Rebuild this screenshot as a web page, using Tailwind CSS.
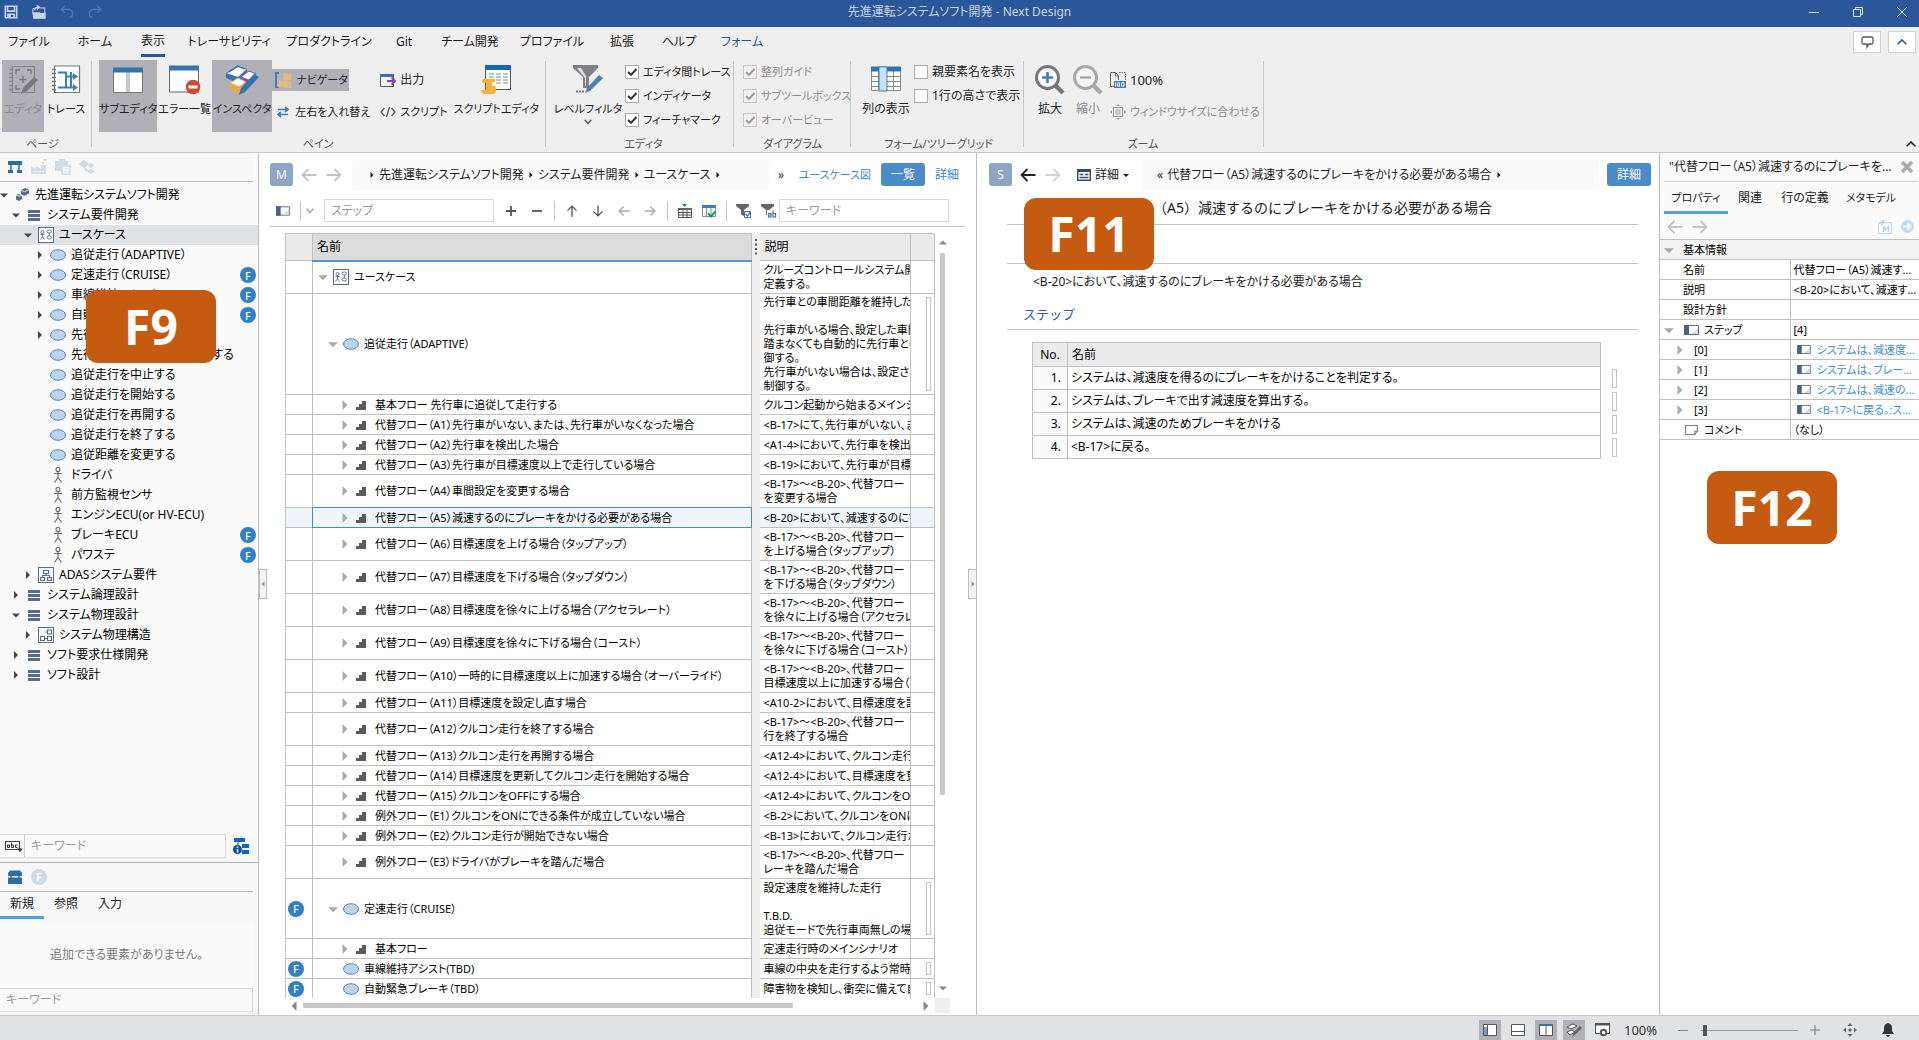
<!DOCTYPE html>
<html lang="ja">
<head>
<meta charset="utf-8">
<title>先進運転システムソフト開発 - Next Design</title>
<script src="https://cdn.jsdelivr.net/npm/@tailwindcss/browser@4"></script>
</head>
<body class="h-screen overflow-hidden flex flex-col bg-white text-[#1a1a1a] text-[12px] leading-4 whitespace-nowrap font-['Noto_Sans','Noto_Sans_CJK_JP',sans-serif] [font-feature-settings:'palt']">

<!-- Shared icon symbols -->
<svg class="hidden" aria-hidden="true">
  <symbol id="arrow-left" viewBox="0 0 16 14"><path d="M15.500 7H1.500M7.500 1L1.500 7l6 6" fill="none" stroke="currentColor" stroke-width="1.800"/></symbol>
  <symbol id="arrow-right" viewBox="0 0 16 14"><path d="M.5 7h14M8.500 1l6 6-6 6" fill="none" stroke="currentColor" stroke-width="1.800"/></symbol>
  <symbol id="tri-right" viewBox="0 0 8 8"><path d="M2 0l4 4-4 4z" fill="currentColor"/></symbol>
  <symbol id="tri-down" viewBox="0 0 8 8"><path d="M0 2.500h8L4 6.500z" fill="currentColor"/></symbol>
  <symbol id="project" viewBox="0 0 16 16"><path d="M7 3l4-2 4 1.500v4L10 9 7 7z M2 8l3-1 3 2v3l-3 2-3-1.500z" fill="#5a6b85"/><path d="M7 3.200l3.500 1.500L15 2.600M2 8.200l3 1 3-.6" stroke="#dfe3ea" fill="none"/></symbol>
  <symbol id="bars" viewBox="0 0 16 16"><path d="M2 3h12v3H2zM2 7h12v3H2zM2 11h12v3H2z" fill="#5a6b85"/></symbol>
  <symbol id="usecase" viewBox="0 0 16 16"><rect x=".5" y=".5" width="15" height="15" fill="#fff" stroke="#5a6b85"/><g fill="none" stroke="#5a6b85" stroke-width=".9"><circle cx="4.500" cy="5" r="1.500"/><path d="M4.500 6.500v3M2.500 7.500h4M2.500 12.500l2-3 2 3"/><ellipse cx="11.300" cy="4.500" rx="2.300" ry="1.500"/><ellipse cx="11.300" cy="10.500" rx="2.300" ry="1.500"/><path d="M11.300 6v3"/></g></symbol>
  <symbol id="ellipse" viewBox="0 0 16 12"><ellipse cx="8" cy="6" rx="7.500" ry="5.300" fill="#bdd3ec" stroke="#5584c4"/></symbol>
  <symbol id="actor" viewBox="0 0 16 16"><g fill="none" stroke="#666" stroke-width="1.100"><circle cx="8" cy="2.500" r="2"/><path d="M8 4.500v6M4 6.500h8M4.500 15.500L8 10.500l3.500 5"/></g></symbol>
  <symbol id="blocktree" viewBox="0 0 16 16"><rect x=".5" y=".5" width="15" height="15" fill="#fff" stroke="#5a6b85"/><path d="M5.500 3.500h5v3h-5zM2.500 10.500h4v3h-4zM9.500 10.500h4v3h-4zM8 6.500v2M4.500 10.500v-2h7v2" fill="none" stroke="#5a6b85" stroke-width="1.200"/></symbol>
  <symbol id="blocks" viewBox="0 0 16 16"><rect x=".5" y=".5" width="15" height="15" fill="#fff" stroke="#5a6b85"/><path d="M9.500 3h4v4h-4zM2.500 9.500h4v4h-4zM9.500 9.500h4v4h-4zM6.500 11.500h3M7.500 5h2" fill="none" stroke="#5a6b85" stroke-width="1.200"/></symbol>
  <symbol id="steps" viewBox="0 0 12 12"><path d="M1 11V8h3V5h3V2h4v9z" fill="#5b5b5f"/></symbol>
  <symbol id="field" viewBox="0 0 15 10"><path d="M.5.500h14v9H.5z" fill="#fff" stroke="#5a6b85"/><path d="M0 0h5v10H0z" fill="#4f617d"/><path d="M14 3v6H8z" fill="#d5d9e0"/></symbol>
  <symbol id="note" viewBox="0 0 15 12"><path d="M.5.500h14v7l-3 4H.5zM14.500 7.500h-3v4" fill="#fff" stroke="#555"/></symbol>
  <symbol id="tick" viewBox="0 0 14 14"><path d="M3 7l3 3 5.500-6" fill="none" stroke="currentColor" stroke-width="1.900"/></symbol>
</svg>

<!-- Title bar -->
<header class="relative flex h-[27px] shrink-0 items-center bg-[#2b579a] pb-1 text-[#c9d6ea]">
  <div class="flex items-center gap-[14px] pl-1">
    <button aria-label="保存"><svg viewBox="0 0 16 16" class="h-[14px] w-[14px]"><path d="M1.500 1.500h13v13h-13zM4 2v5h8V2M4.500 14.500v-4h7v4" fill="none" stroke="#c9d6ea" stroke-width="1.800"/><path d="M5 11h3v3H5z" fill="#c9d6ea"/></svg></button>
    <button aria-label="開く"><svg viewBox="0 0 16 16" class="h-[14px] w-[14px]"><path d="M1 9h14v6H2zM1 4h2M1 4v5M9 3.500h5.500V9" fill="#c9d6ea" stroke="#c9d6ea" stroke-width="1.200"/><path d="M9 4h5v5H9z" fill="#2b579a"/><path d="M3 6c0-3 2-3.500 5-3.500M5.500.500l3 2-3 2.500" fill="none" stroke="#c9d6ea" stroke-width="1.500"/></svg></button>
    <button aria-label="元に戻す"><svg viewBox="0 0 16 16" class="h-[14px] w-[14px]"><path d="M5.500 1L1.500 5l4 4M2 5h7c4 0 5.500 3 5.500 5s-1 4-3.500 4" fill="none" stroke="#5079b5" stroke-width="1.600"/></svg></button>
    <button aria-label="やり直し"><svg viewBox="0 0 16 16" class="h-[14px] w-[14px]"><path d="M10.500 1l4 4-4 4M14 5H7c-4 0-5.500 3-5.500 5s1 4 3.500 4" fill="none" stroke="#5079b5" stroke-width="1.600"/></svg></button>
  </div>
  <h1 class="absolute inset-x-0 top-1 text-center">先進運転システムソフト開発 - Next Design</h1>
  <div class="relative ml-auto flex items-center gap-[34px] pr-3">
    <button aria-label="最小化"><svg viewBox="0 0 10 10" class="h-[10px] w-[10px]"><path d="M0 5.500h10" stroke="#dce5f3"/></svg></button>
    <button aria-label="元のサイズ"><svg viewBox="0 0 10 10" class="h-[10px] w-[10px]"><path d="M.5 2.500h7v7h-7zM2.500 2V.500h7v7H8" fill="none" stroke="#dce5f3"/></svg></button>
    <button aria-label="閉じる"><svg viewBox="0 0 10 10" class="h-[10px] w-[10px]"><path d="M0 0l10 10M10 0L0 10" stroke="#dce5f3"/></svg></button>
  </div>
</header>

<!-- Ribbon tabs -->
<nav class="flex h-[30px] shrink-0 bg-[#efefef]">
  <div class="grid grid-cols-[58px_74px_42px_110px_90px_60px_72px_92px_48px_66px_60px]">
    <button>ファイル</button>
    <button>ホーム</button>
    <button class="flex flex-col items-center pt-[6px]"><span class="border-b-[3px] border-[#2b579a] pb-[5px]">表示</span></button>
    <button>トレーサビリティ</button>
    <button>プロダクトライン</button>
    <button>Git</button>
    <button>チーム開発</button>
    <button>プロファイル</button>
    <button>拡張</button>
    <button>ヘルプ</button>
    <button class="text-[#2b579a]">フォーム</button>
  </div>
  <div class="ml-auto flex gap-[7px] pr-[3px] pt-1">
    <button aria-label="コメント" class="flex h-[22px] w-7 items-center justify-center border border-[#d0d0d6] bg-white"><svg viewBox="0 0 13 13" class="h-[13px] w-[13px]"><path d="M2.500 1h8Q12 1 12 2.500v4Q12 8 10.500 8H8l-2 3V8H2.500Q1 8 1 6.500v-4Q1 1 2.500 1z" fill="none" stroke="#555" stroke-width="1.300"/></svg></button>
    <button aria-label="折りたたむ" class="flex h-[22px] w-7 items-center justify-center border border-[#d0d0d6] bg-white"><svg viewBox="0 0 10 6" class="h-[6px] w-[10px]"><path d="M.7 5.300L5 1l4.300 4.300" fill="none" stroke="#2b579a" stroke-width="1.600"/></svg></button>
  </div>
</nav>

<!-- Ribbon -->
<section class="flex h-24 shrink-0 border-b border-[#c6c6c6] bg-[#efefef] pt-[3px] text-[#222]">
  <div class="mb-[5px] mt-px flex w-[92px] flex-col justify-between border-r border-[#c6c6c6] pl-[2px]">
    <div class="-mt-px flex gap-[2px]">
      <button class="flex h-[72px] w-[42px] flex-col items-center gap-[6px] bg-[#b0b0b6] pt-[5px] text-[11px] text-[#8a8a8e]" disabled>
        <svg viewBox="0 0 30 30" class="h-[30px] w-[30px]"><path d="M4.500 1.500h22v26h-22z" fill="none" stroke="#85858a" stroke-width="1.200"/><path d="M4 4.500H1M4 8.500H1M4 12.500H1M4 16.500H1M4 20.500H1M4 24.500H1" stroke="#85858a" stroke-width="1.500"/><path d="M8 9V5h4M19 5h4v4M8 20v4h4M15 11v7M11.500 14.500h7" fill="none" stroke="#77777c" stroke-width="1.300"/><path d="M13 29l2-6L26 12l4 3-11 11z" fill="#77777c"/></svg>エディタ</button>
      <button class="flex w-10 flex-col items-center gap-[6px] pt-[5px] text-[11px]">
        <svg viewBox="0 0 30 30" class="h-[30px] w-[30px]"><path d="M3.500 1h25v26.500h-25z" fill="#fff" stroke="#777" stroke-width="1.200"/><path d="M5 4.500H1M5 8.500H1M5 12.500H1M5 16.500H1M5 20.500H1M5 24.500H1" stroke="#777" stroke-width="1.500"/><path d="M7 7.500h8v15h9M7 22.500h8M15 11.500h9M20 7v16" fill="none" stroke="#3f7bbf" stroke-width="2"/><path d="M22 8l5 3.500-5 3.500zM22 19l5 3.500-5 3.500z" fill="#3f7bbf"/></svg>トレース</button>
    </div>
    <div class="-mb-1 pr-2 text-center text-[11px] leading-[14px] text-[#555]">ページ</div>
  </div>

  <div class="mb-[5px] mt-px flex w-[454px] flex-col justify-between border-r border-[#c6c6c6] pl-[7px]">
    <div class="-mt-px flex">
      <button class="flex h-[72px] w-[60px] flex-col items-center gap-[6px] bg-[#b0b0b6] pt-[5px] text-[11px]">
        <svg viewBox="0 0 30 30" class="h-[30px] w-[30px]"><path d="M.5 6h29v21.500H.5z" fill="#fff" stroke="#777"/><path d="M14 7v20M16 7v20" stroke="#777" stroke-width=".8"/><path d="M0 2.500h30v5H0z" fill="#3572ae"/></svg>サブエディタ</button>
      <button class="flex w-[56px] flex-col items-center gap-[6px] pt-[5px] text-[11px]">
        <svg viewBox="0 0 32 30" class="h-[30px] w-8"><path d="M.5 3h29v24H.5z" fill="#fff" stroke="#666"/><path d="M0 .500h30v5H0z" fill="#3572ae"/><circle cx="24" cy="22" r="7.300" fill="#cc4b35"/><path d="M19.500 20.500h9v3h-9z" fill="#fff"/></svg>エラー一覧</button>
      <button class="flex h-[72px] w-[62px] flex-col items-center gap-[6px] bg-[#b0b0b6] pt-[5px] text-[11px]">
        <svg viewBox="0 0 34 30" class="h-[30px] w-[34px]"><path d="M2 8l9-8 10 4-7 8-11-1z" fill="#fff"/><path d="M1 8l12 4v6L1 13zM13 12l9-8v5l-9 9zM1 8l11-8 10 4" fill="#3572ae"/><path d="M5 7l8-5 6 2.500-6 5z" fill="#fff"/><path d="M16 12l8-6 7 3-7 6z" fill="#fff" stroke="#8a4bab"/><path d="M16 12l8 3.500V21l-8-4z" fill="#8a4bab"/><path d="M5 18l8-5 8 4-7 5z" fill="#fff" stroke="#eaa94b"/><path d="M5 18l9 4v7l-9-5zM14 22l7-5v7l-7 5z" fill="#eaa94b"/><path d="M14 30l2-7L29 9l5 3-14 15z" fill="#3572ae"/></svg>インスペクタ</button>
      <div class="flex flex-col items-start gap-[10px] pt-[9px]">
        <button class="flex h-[22px] items-center gap-1 bg-[#b0b0b6] pl-[3px] pr-px"><svg viewBox="0 0 17 17" class="h-[17px] w-[17px]"><path d="M0 0h4v16H0z" fill="#3f7bbf"/><path d="M2 2h2v12H2z" fill="#9fb9d6"/><path d="M8 1h3l1 1h4v6H8zM3 8h3l1 1h3v6H3zM10 9h3l1 1h2v6h-6z" fill="#e5b978" stroke="#c9c0b2" stroke-width=".6"/></svg><span class="text-[11px]">ナビゲータ</span></button>
        <button class="flex h-[22px] items-center gap-[6px] pl-[5px]"><svg viewBox="0 0 12 12" class="h-3 w-3"><path d="M1 3.500h9M8 1l3 2.500L8 6M11 8.500H2M4 6L1 8.500 4 11" fill="none" stroke="#3f7bbf" stroke-width="1.700"/></svg><span class="text-[11px]">左右を入れ替え</span></button>
      </div>
      <div class="flex flex-col items-start gap-[10px] pl-[10px] pt-[9px]">
        <button class="flex h-[22px] items-center gap-1"><svg viewBox="0 0 16 15" class="h-[15px] w-4"><path d="M.5 2.500h13v11H.5z" fill="#fff" stroke="#555"/><path d="M0 1h14v3H0z" fill="#3572ae"/><path d="M7 8h8M11.500 4.500L15 8l-3.500 3.500" fill="none" stroke="#8a3fb0" stroke-width="2"/></svg>出力</button>
        <button class="flex h-[22px] items-center gap-1"><svg viewBox="0 0 16 12" class="h-3 w-4"><path d="M4.500 2L1 6l3.500 4M11.500 2L15 6l-3.500 4M9.500 1l-3 10" fill="none" stroke="#555" stroke-width="1.300"/></svg><span class="text-[11px]">スクリプト</span></button>
      </div>
      <button class="ml-auto flex w-[100px] flex-col items-center gap-[6px] pt-[5px] text-[11px]">
        <svg viewBox="0 0 32 30" class="h-[30px] w-8"><path d="M5.500 1h25v23.500h-25z" fill="#fff" stroke="#555"/><path d="M5 0h26v5H5z" fill="#1464b8"/><path d="M9 9h5M9 12h5M9 15h5M16 9h5M16 12h5M16 15h5M16 18h5M23 9h5M23 12h5M23 15h5M23 18h5" stroke="#888"/><path d="M3 14h12v3h-3v4h3q1 0 1 4t-3 4H4q-3-1-3-4h5v-7H3q-2-2 0-4z" fill="#f8b334"/></svg>スクリプトエディタ</button>
    </div>
    <div class="-mb-1 pr-2 text-center text-[11px] leading-[14px] text-[#555]">ペイン</div>
  </div>

  <div class="mb-[5px] mt-px flex w-[188px] flex-col justify-between border-r border-[#c6c6c6] pl-2">
    <div class="-mt-px flex">
      <button class="flex w-[68px] flex-col items-center gap-[6px] pt-[5px] text-[11px]">
        <svg viewBox="0 0 30 30" class="h-[30px] w-[30px]"><path d="M0 0h25v3L16 12v11h-6V12L0 3z" fill="#808084"/><path d="M4 3h4l5 8v10h-1V13z" fill="#e0e0e0"/><path d="M3 26.500h2M6 26.500h2M9 26.500h2" stroke="#777" stroke-width="2"/><path d="M12 28l2-5L26 10l4 3-13 13z" fill="#4a7fbe"/></svg>レベルフィルタ
        <svg viewBox="0 0 8 6" class="-mt-1 h-[6px] w-2"><path d="M.7.700L4 4.500 7.300.700" fill="none" stroke="#555" stroke-width="1.400"/></svg></button>
      <div class="flex flex-col gap-2 pl-[3px] pt-1 text-[11px]" id="editor-checks"></div>
    </div>
    <div class="-mb-1 text-center text-[11px] leading-[14px] text-[#555]">エディタ</div>
  </div>

  <div class="mb-[5px] mt-px flex w-[117px] flex-col justify-between border-r border-[#c6c6c6] pl-[9px]">
    <div class="-mt-px flex flex-col gap-2 pt-1 text-[11px] text-[#8c8c8c]" id="diagram-checks"></div>
    <div class="-mb-1 pr-2 text-center text-[11px] leading-[14px] text-[#555]">ダイアグラム</div>
  </div>

  <div class="mb-[5px] mt-px flex w-[173px] flex-col justify-between border-r border-[#c6c6c6] pl-[7px]">
    <div class="-mt-px flex">
      <button class="flex w-[56px] flex-col items-center gap-[6px] pt-[5px]">
        <svg viewBox="0 0 30 30" class="h-[30px] w-[30px]"><path d="M.5 3.500h29v22H.5z" fill="#fff" stroke="#888"/><path d="M0 11.500h30M0 16.500h30M0 21.500h30M7.500 2v24M22.500 2v24" stroke="#888"/><path d="M0 1.500h30v5H0z" fill="#3572ae"/><path d="M8 2h8v24H8z" fill="#bfe6fa" stroke="#4f7c99"/></svg>列の表示</button>
      <div class="flex flex-col gap-2 pt-1" id="form-checks"></div>
    </div>
    <div class="-mb-1 pr-1 text-center text-[11px] leading-[14px] text-[#555]">フォーム/ツリーグリッド</div>
  </div>

  <div class="mb-[5px] mt-px flex w-60 flex-col justify-between border-r border-[#c6c6c6] pl-[7px]">
    <div class="-mt-px flex">
      <button class="flex w-[38px] flex-col items-center gap-[6px] pt-[5px]">
        <svg viewBox="0 0 30 30" class="h-[30px] w-[30px]"><path d="M20 20l8 8" stroke="#77777b" stroke-width="4.500"/><circle cx="12.500" cy="12.500" r="11" fill="#fff" stroke="#77777b" stroke-width="3"/><path d="M12.500 7v11M7 12.500h11" stroke="#3f7bbf" stroke-width="2.600"/></svg>拡大</button>
      <button class="flex w-[38px] flex-col items-center gap-[6px] pt-[5px] text-[#8c8c8c]" disabled>
        <svg viewBox="0 0 30 30" class="h-[30px] w-[30px]"><path d="M20 20l8 8" stroke="#a8a8a8" stroke-width="4.500"/><circle cx="12.500" cy="12.500" r="11" fill="#f4f4f4" stroke="#a8a8a8" stroke-width="3"/><path d="M7 12.500h11" stroke="#a0a0a0" stroke-width="2.200"/></svg>縮小</button>
      <div class="flex flex-col items-start gap-[10px] pl-[3px] pt-[9px]">
        <button class="flex h-[22px] items-center gap-1 text-[13px]"><svg viewBox="0 0 16 16" class="h-4 w-4"><path d="M4 14.500H.5V.500h5l3 3.500v4M5.500.500V4h3" fill="none" stroke="#666"/><path d="M9 .500h6.500V8" fill="none" stroke="#666" stroke-dasharray="1.500 1"/><path d="M4 9h12v7H4z" fill="#3f7bbf"/><path d="M5.500 10.500v4M7.500 10.800h2v3.400h-2zM11.500 10.800h2.500v3.400h-2.500z" stroke="#fff" fill="none"/></svg>100%</button>
        <button class="flex h-[22px] items-center gap-1 text-[11px] text-[#8c8c8c]" disabled><svg viewBox="0 0 16 16" class="h-4 w-4"><path d="M3.500 3.500h9v9h-9z" fill="none" stroke="#999"/><path d="M5.500 6h5M5.500 8h5M5.500 10h5" stroke="#999"/><path d="M8 0l2 2H6zM8 16l2-2H6zM0 8l2-2v4zM16 8l-2-2v4z" fill="#999"/></svg>ウィンドウサイズに合わせる</button>
      </div>
    </div>
    <div class="-mb-1 pr-2 text-center text-[11px] leading-[14px] text-[#555]">ズーム</div>
  </div>
  <button aria-label="リボンを最小化" class="mb-[5px] ml-auto mr-[3px] self-end"><svg viewBox="0 0 10 6" class="h-[6px] w-[10px]"><path d="M.7 5.300L5 1l4.300 4.300" fill="none" stroke="#222" stroke-width="1.600"/></svg></button>
</section>

<!-- Work area -->
<div class="flex min-h-0 flex-1">

  <!-- Navigator -->
  <aside class="relative flex w-[259px] shrink-0 flex-col border-r border-[#bdbdc0] bg-[#fafafa]">
    <div class="mr-[5px] flex h-[29px] shrink-0 items-center gap-2 border-b border-[#bdbdc0] bg-[#f8f8f8] pl-[7px]">
      <svg viewBox="0 0 16 14" class="h-[14px] w-4"><path d="M1 1h14v4H1zM1 10h5v3H1zM10 10h5v3h-5z" fill="#2b6cab"/><path d="M4 5v5M12 5v5" stroke="#2b6cab" stroke-width="1.500"/></svg>
      <svg viewBox="0 0 16 16" class="h-4 w-4"><path d="M0 15V7l5 3V7l5 3V6h5v9zM11 3h2v2h-2zM12 0h4v1.500h-4z" fill="#d0dbe6"/><path d="M2 12.500h12" stroke="#fff" stroke-dasharray="2 1"/></svg>
      <svg viewBox="0 0 16 16" class="h-4 w-4"><path d="M0 2h4V0h6v2h3v4H7v6H0z" fill="#d0dbe6"/><path d="M7 7h8v8H7z" fill="#fff" stroke="#d0dbe6" stroke-width="1.500"/><path d="M9 10h5M9 12.500h5" stroke="#d0dbe6"/></svg>
      <svg viewBox="0 0 16 16" class="h-4 w-4"><path d="M5 1l5 4-5 4-5-4zM12 4l3 2.500L12 9 9.500 6.500zM12 10l3 2.500-3 2.500-3-2.500zM6 8v4h4" fill="#d0dbe6" stroke="#d0dbe6" stroke-width=".5"/></svg>
    </div>
    <ul class="min-h-0 flex-1 overflow-hidden pt-[3px]" id="tree"></ul>
    <div class="flex h-7 shrink-0 items-start bg-[#f7f7f7]">
      <div class="flex h-6 w-[226px] items-center border border-l-0 border-[#dadada] bg-[#fafafa]">
        <svg viewBox="0 0 18 14" class="ml-[5px] h-[14px] w-[18px]"><path d="M.5 2.500h14v8H.5z" fill="none" stroke="#444" stroke-width="1.200"/><path d="M2.500 8.500v-2.500h2v2.500zM6.500 3.500v5h2V6h-2M12.500 6h-2v2.500h2" fill="none" stroke="#333"/><path d="M12 9.500h6l-3 3.500z" fill="#333"/></svg>
        <div class="ml-px h-[22px] border-l border-[#c8ced8]"></div>
        <input aria-label="ナビゲータ検索" placeholder="キーワード" class="ml-[6px] w-[180px] bg-transparent text-[12px] outline-none placeholder:text-[#9a9a9a]">
      </div>
      <svg viewBox="0 0 16 16" class="ml-[7px] mt-1 h-4 w-4"><path d="M1 0h11v4H1zM9 6h7v4H9zM9 12h7v4H9z" fill="#1464b8"/><path d="M5 4v4" stroke="#555"/><circle cx="4.500" cy="11.500" r="4.500" fill="#0d4da3"/><path d="M4.500 8.500v1.500M4.500 11v3.500" stroke="#fff" stroke-width="1.500"/></svg>
    </div>
    <div class="shrink-0 border-t border-[#b0b0b4] bg-[#f7f7f7]">
      <div class="mr-[5px] flex h-[29px] items-center gap-2 border-b border-[#bdbdc0] pl-[7px]">
        <svg viewBox="0 0 16 14" class="h-[14px] w-4"><path d="M1 3l2-2.500h10L15 3v3H1zM1 7.500h14V14H1z" fill="#2b6cab"/><path d="M4 6v3M12 6v3" stroke="#2b6cab" stroke-width="1.500"/></svg>
        <span class="flex h-4 w-4 items-center justify-center rounded-full bg-[#cddbe7] text-[10px] font-bold text-white">F</span>
      </div>
      <div class="mb-[3px] flex h-[27px]">
        <button class="w-11 border-b-[3px] border-[#4aa3dc]">新規</button>
        <button class="w-11 border-b-[3px] border-transparent">参照</button>
        <button class="w-11 border-b-[3px] border-transparent">入力</button>
      </div>
      <div class="mr-[5px] h-[66px] bg-[#fafafa] text-center leading-[66px] text-[#777]">追加できる要素がありません。</div>
      <div class="mb-[3px] mr-[5px] flex h-6 items-center border border-l-0 border-[#dadada] bg-[#fafafa] pl-[6px]">
        <input aria-label="要素検索" placeholder="キーワード" class="w-full bg-transparent text-[12px] outline-none placeholder:text-[#9a9a9a]">
      </div>
    </div>
    <button aria-label="ナビゲータを閉じる" class="absolute -right-[9px] top-[416px] z-10 flex h-[30px] w-2 items-center justify-center border border-[#bdbdc0] bg-[#f4f4f4] text-[#999]"><svg class="h-[6px] w-[6px] rotate-180"><use href="#tri-right"/></svg></button>
    <kbd class="absolute left-[86px] top-[137px] flex h-[73px] w-[130px] items-center justify-center rounded-[12px] bg-[#c55a11] font-['Noto_Sans'] text-[48px] font-bold leading-none text-white">F9</kbd>
  </aside>

  <!-- Main editor -->
  <main class="relative flex min-w-0 flex-[695] flex-col border-r border-[#bdbdc0] pl-[11px] pr-[11px]">
    <div class="flex h-[43px] shrink-0 items-center">
      <span class="flex h-[23px] w-[23px] items-center justify-center rounded-[3px] bg-[#8ea4c4] text-white">M</span>
      <button aria-label="戻る" class="ml-2 text-[#c4c4c4]"><svg class="h-[14px] w-4"><use href="#arrow-left"/></svg></button>
      <button aria-label="進む" class="ml-[9px] text-[#c4c4c4]"><svg class="h-[14px] w-4"><use href="#arrow-right"/></svg></button>
      <nav class="ml-[10px] flex h-[30px] min-w-0 flex-1 items-center gap-[3px] rounded-[3px] bg-[#fafafa] pl-4 text-[#1a1a1a]">
        <svg class="h-[6px] w-2"><use href="#tri-right"/></svg><a href="#p">先進運転システムソフト開発</a>
        <svg class="h-[6px] w-2"><use href="#tri-right"/></svg><a href="#r">システム要件開発</a>
        <svg class="h-[6px] w-2"><use href="#tri-right"/></svg><a href="#u">ユースケース</a>
        <svg class="h-[6px] w-2"><use href="#tri-right"/></svg>
      </nav>
      <div class="flex w-[196px] items-center justify-end pr-[6px] text-[#3f86c8]">
        <span class="mr-auto pl-[9px] text-[#333]">»</span>
        <a href="#diagram" class="text-[11px]">ユースケース図</a>
        <button class="ml-[10px] h-[23px] w-11 rounded-[3px] bg-[#4a8cc8] text-white">一覧</button>
        <a href="#detail" class="ml-[10px]">詳細</a>
      </div>
    </div>

    <div class="flex h-[31px] shrink-0 items-start border-b border-[#c4c4c4] pt-[3px]">
      <div class="flex h-[23px] w-full items-center">
        <svg class="ml-[6px] h-[10px] w-[14px]"><use href="#field"/></svg>
        <div class="ml-[10px] h-5 border-l border-[#c8c8c8]"></div>
        <svg viewBox="0 0 8 6" class="ml-[5px] h-[6px] w-2"><path d="M.5.500L4 4.500 7.500.500" fill="none" stroke="#aaa" stroke-width="1.500"/></svg>
        <input aria-label="追加要素" placeholder="ステップ" class="ml-[10px] h-[23px] w-[170px] border border-[#d8d8d8] bg-white px-[6px] outline-none placeholder:text-[#9a9a9a]">
        <button aria-label="追加" class="ml-3"><svg viewBox="0 0 10 10" class="h-[10px] w-[10px]"><path d="M5 0v10M0 5h10" stroke="#555" stroke-width="1.800"/></svg></button>
        <button aria-label="削除" class="ml-4"><svg viewBox="0 0 10 10" class="h-[10px] w-[10px]"><path d="M0 5h10" stroke="#555" stroke-width="1.800"/></svg></button>
        <div class="ml-3 h-5 border-l border-[#c8c8c8]"></div>
        <div class="ml-[11px] flex items-center gap-[14px] text-[#555]">
          <svg class="h-3 w-3 rotate-90"><use href="#arrow-left"/></svg>
          <svg class="h-3 w-3 rotate-90"><use href="#arrow-right"/></svg>
          <svg class="h-3 w-3 text-[#aaa]"><use href="#arrow-left"/></svg>
          <svg class="h-3 w-3 text-[#aaa]"><use href="#arrow-right"/></svg>
        </div>
        <div class="ml-[11px] h-5 border-l border-[#c8c8c8]"></div>
        <svg viewBox="0 0 14 14" class="ml-[10px] h-[14px] w-[14px]"><path d="M4 0h5L6.500 3z" fill="#1f8a3b"/><path d="M.5 5.500h13v8H.5zM.5 8.500h13M.5 11h13M5 6v8M9 6v8" fill="none" stroke="#555"/><path d="M0 4h14v2H0z" fill="#666"/></svg>
        <svg viewBox="0 0 14 14" class="ml-[10px] h-[14px] w-[14px]"><path d="M.5 1.500h13v11H.5zM4.500 2v10M9 2v10" fill="#fff" stroke="#6f93bb"/><path d="M0 1h14v3H0z" fill="#3f7bbf"/><path d="M6 9.500l3 3L14 7" fill="none" stroke="#1f9a4b" stroke-width="2"/></svg>
        <div class="ml-[10px] h-5 border-l border-[#c8c8c8]"></div>
        <svg viewBox="0 0 15 14" class="ml-[9px] h-[14px] w-[15px]"><path d="M0 0h13v2L8 6v6l-3-1.500V6L0 2z" fill="#66666a"/><path d="M8.500 7.500h6v6h-6z" fill="#fff" stroke="#3f6fa8"/><path d="M9.500 10l2 2 3-4" fill="none" stroke="#3f6fa8" stroke-width="1.300"/></svg>
        <svg viewBox="0 0 16 14" class="ml-[10px] h-[14px] w-4"><path d="M0 0h13v2L8 6v6l-3-1.500V6L0 2z" fill="#66666a"/><path d="M6 6h10v8H6z" fill="#fff"/><path d="M7 9.500h3v3.500H7.500v-2H10M12 6.500V13h2.500V9.500H12" fill="none" stroke="#3f6fa8" stroke-width="1.200"/></svg>
        <input aria-label="一覧検索" placeholder="キーワード" class="ml-[2px] h-[23px] w-[170px] border border-[#d8d8d8] bg-white px-[6px] outline-none placeholder:text-[#9a9a9a]">
      </div>
    </div>

    <div class="mt-[6px] flex min-h-0 flex-1 pl-[15px] pr-[15px]">
      <div class="min-w-0 flex-1 overflow-hidden">
        <table class="w-full table-fixed border-collapse text-[11px] leading-[14px] text-black">
          <colgroup><col class="w-[27px]"><col><col class="w-2"><col class="w-[151px]"><col class="w-6"></colgroup>
          <thead>
            <tr class="h-[27px] bg-[#ebebeb] text-left">
              <th class="border border-[#c0c0c0]"></th>
              <th class="border border-b-2 border-[#c0c0c0] border-b-[#4a9ad4] bg-[#dcdcdc] pl-1 text-[12px] font-normal">名前</th>
              <th class="bg-[#efefef]"><svg viewBox="0 0 2 16" class="mx-auto h-4 w-[2px]"><path d="M1 0v16" stroke="#555" stroke-width="2" stroke-dasharray="2 2.500"/></svg></th>
              <th class="border border-l-0 border-[#c0c0c0] pl-[5px] text-[12px] font-normal">説明</th>
              <th class="border border-[#c0c0c0]"></th>
            </tr>
          </thead>
          <tbody id="grid"></tbody>
        </table>
      </div>
      <div class="flex w-[15px] shrink-0 flex-col items-center gap-[6px] pt-[6px] text-[#888]">
        <svg class="h-2 w-[10px] rotate-180"><use href="#tri-down"/></svg>
        <div class="h-[542px] w-[5px] bg-[#c9c9c9]"></div>
        <svg class="mb-[6px] mt-auto h-2 w-[10px]"><use href="#tri-down"/></svg>
      </div>
    </div>
    <div class="mb-[2px] flex h-[15px] shrink-0 items-center pl-[19px] pr-[15px] text-[#888]">
      <svg class="h-[10px] w-[10px] rotate-180"><use href="#tri-right"/></svg>
      <div class="ml-1 h-[5px] w-[490px] bg-[#c9c9c9]"></div>
      <svg class="ml-auto h-[10px] w-[10px]"><use href="#tri-right"/></svg>
      <div class="ml-1 h-[15px] w-[15px] bg-[#efefef]"></div>
    </div>
    <button aria-label="サブエディタを閉じる" class="absolute right-0 top-[416px] flex h-[30px] w-2 items-center justify-center border border-r-0 border-[#bdbdc0] bg-[#f4f4f4] text-[#999]"><svg class="h-[6px] w-[6px]"><use href="#tri-right"/></svg></button>
  </main>

  <!-- Sub editor -->
  <section class="relative flex min-w-0 flex-[682] flex-col border-r border-[#bdbdc0]">
    <div class="flex h-[43px] shrink-0 items-center pl-3 pr-2">
      <span class="flex h-[23px] w-[23px] items-center justify-center rounded-[3px] bg-[#8ea4c4] text-white">S</span>
      <button aria-label="戻る" class="ml-2 text-[#222]"><svg class="h-[14px] w-4"><use href="#arrow-left"/></svg></button>
      <button aria-label="進む" class="ml-[9px] text-[#d4d4d4]"><svg class="h-[14px] w-4"><use href="#arrow-right"/></svg></button>
      <button class="ml-4 flex items-center gap-1"><svg viewBox="0 0 14 12" class="h-3 w-[14px]"><path d="M.7.700h12.600v10.600H.7z" fill="#fff" stroke="#3a4a66" stroke-width="1.400"/><path d="M0 0h14v3H0z" fill="#3a4a66"/><path d="M2.500 5.500h4M2.500 8.500h9M8 5.500h3.500" stroke="#3a4a66" stroke-width="1.300"/></svg>詳細<svg class="h-[6px] w-[6px]"><use href="#tri-down"/></svg></button>
      <nav class="ml-3 flex h-[30px] min-w-0 flex-1 items-center gap-1 rounded-[3px] bg-[#fafafa] pl-4">
        <span>«</span><a href="#a5">代替フロー（A5）減速するのにブレーキをかける必要がある場合</a>
        <svg class="h-[6px] w-2"><use href="#tri-right"/></svg>
      </nav>
      <button class="ml-2 h-[23px] w-11 rounded-[3px] bg-[#4a8cc8] text-white">詳細</button>
    </div>
    <div class="pl-[30px] pr-[21px]">
      <h2 class="h-[29px] border-b border-[#c4c4c4] pl-[76px] text-[14px] leading-6 [font-feature-settings:normal]">代替フロー（A5）減速するのにブレーキをかける必要がある場合</h2>
      <h3 class="h-[39px] border-b border-[#c4c4c4] pl-5 pt-3 text-[13px] leading-6 text-[#3a50b0]">説明</h3>
      <p class="h-[38px] pl-[26px] pt-[10px]">&lt;B-20&gt;において、減速するのにブレーキをかける必要がある場合</p>
      <h3 class="h-[28px] border-b border-[#c4c4c4] pl-4 text-[13px] leading-6 text-[#3a50b0] [font-feature-settings:normal]">ステップ</h3>
      <div class="mt-3 flex pl-[25px] pr-[21px]">
        <table class="min-w-0 flex-1 table-fixed border-collapse text-black">
          <colgroup><col class="w-[35px]"><col></colgroup>
          <thead><tr class="h-6 bg-[#ebebeb]"><th class="w-[35px] border border-[#c0c0c0] font-normal">No.</th><th class="w-[534px] border border-[#c0c0c0] pl-1 text-left font-normal">名前</th></tr></thead>
          <tbody>
            <tr class="h-[23px]"><td class="border border-[#c0c0c0] bg-[#fafafa] pr-[6px] text-right">1.</td><td class="border border-[#c0c0c0] pl-[3px]">システムは、減速度を得るのにブレーキをかけることを判定する。</td></tr>
            <tr class="h-[23px]"><td class="border border-[#c0c0c0] bg-[#fafafa] pr-[6px] text-right">2.</td><td class="border border-[#c0c0c0] pl-[3px]">システムは、ブレーキで出す減速度を算出する。</td></tr>
            <tr class="h-[23px]"><td class="border border-[#c0c0c0] bg-[#fafafa] pr-[6px] text-right">3.</td><td class="border border-[#c0c0c0] pl-[3px]">システムは、減速のためブレーキをかける</td></tr>
            <tr class="h-[23px]"><td class="border border-[#c0c0c0] bg-[#fafafa] pr-[6px] text-right">4.</td><td class="border border-[#c0c0c0] pl-[3px]">&lt;B-17&gt;に戻る。</td></tr>
          </tbody>
        </table>
        <div class="ml-[11px] flex flex-col gap-1 pt-[27px]">
          <i class="h-[19px] w-[5px] border border-[#c4c4c4]"></i>
          <i class="h-[19px] w-[5px] border border-[#c4c4c4]"></i>
          <i class="h-[19px] w-[5px] border border-[#c4c4c4]"></i>
          <i class="h-[19px] w-[5px] border border-[#c4c4c4]"></i>
        </div>
      </div>
    </div>
    <kbd class="absolute left-[47px] top-[45px] flex h-[72px] w-[130px] items-center justify-center rounded-[12px] bg-[#c55a11] font-['Noto_Sans'] text-[48px] font-bold leading-none text-white">F11</kbd>
  </section>

  <!-- Inspector -->
  <aside class="relative flex w-[259px] shrink-0 flex-col">
    <div class="bg-[#fafafa] pl-1">
      <div class="mr-px flex h-[29px] items-center border-b border-[#d0d0d0] pl-[5px] pr-1">
        <h2 class="w-[226px] truncate">"代替フロー（A5）減速するのにブレーキをかける必要がある場合"</h2>
        <button aria-label="閉じる" class="ml-auto"><svg viewBox="0 0 14 14" class="h-[14px] w-[14px]"><path d="M2 2l10 10M12 2L2 12" stroke="#aaa" stroke-width="3.500"/></svg></button>
      </div>
      <div class="flex h-8 pr-2">
        <button class="w-16 border-b-[3px] border-[#4aa3dc] pt-[2px] text-[11px]">プロパティ</button>
        <button class="w-11 border-b-[3px] border-transparent pt-[2px]">関連</button>
        <button class="w-[66px] border-b-[3px] border-transparent pt-[2px]">行の定義</button>
        <button class="w-[66px] border-b-[3px] border-transparent pt-[2px] text-[11px]">メタモデル</button>
      </div>
      <div class="flex h-[25px] items-center gap-[9px] pl-[3px] pr-[5px] text-[#c4c4c4]">
        <svg class="h-[14px] w-4"><use href="#arrow-left"/></svg>
        <svg class="h-[14px] w-4"><use href="#arrow-right"/></svg>
        <svg viewBox="0 0 15 14" class="ml-auto h-[14px] w-[15px]"><path d="M1.500 5v8.500h13V2.500H8" fill="none" stroke="#ccd6df"/><path d="M2 4c1-2 2-2 5-2M5 0l2 2-2 2.500M6.500 12V7l2.500 3 2.500-3v5" fill="none" stroke="#b9d0e2" stroke-width="1.400"/></svg>
        <svg viewBox="0 0 13 13" class="h-[13px] w-[13px]"><circle cx="6.500" cy="6.500" r="6.500" fill="#c6dcec"/><path d="M2.500 6.500h7M6.500 3.500l3 3-3 3" fill="none" stroke="#fff" stroke-width="1.600"/></svg>
      </div>
    </div>
    <table class="w-full table-fixed border-collapse text-[11px] leading-4 text-black">
      <colgroup><col class="w-[130px]"><col></colgroup>
      <tbody id="props"></tbody>
    </table>
    <kbd class="absolute left-[47px] top-[318px] flex h-[73px] w-[130px] items-center justify-center rounded-[12px] bg-[#c55a11] font-['Noto_Sans'] text-[48px] font-bold leading-none text-white">F12</kbd>
  </aside>
</div>

<!-- Status bar -->
<footer class="flex h-[25px] shrink-0 items-center justify-end border-t border-[#c9cacc] bg-[#e1e2e4] pr-6 pt-1">
  <div class="flex items-center gap-[6px]">
    <button aria-label="ナビゲータ" class="flex h-5 w-[22px] items-center justify-center bg-[#b0b0b6]"><svg viewBox="0 0 14 12" class="h-3 w-[14px]"><path d="M.5.500h13v11H.5zM4.500 1v10" fill="#fff" stroke="#555"/><path d="M1 3h3v8H1z" fill="#7f9dbf"/></svg></button>
    <button aria-label="出力" class="flex h-5 w-[22px] items-center justify-center"><svg viewBox="0 0 14 12" class="h-3 w-[14px]"><path d="M.5.500h13v11H.5zM1 7.500h12" fill="#fff" stroke="#555"/></svg></button>
    <button aria-label="サブエディタ" class="flex h-5 w-[22px] items-center justify-center bg-[#b0b0b6]"><svg viewBox="0 0 14 12" class="h-3 w-[14px]"><path d="M.5.500h13v11H.5zM7 1v10" fill="#fff" stroke="#555"/><path d="M0 0h14v2H0z" fill="#3572ae"/></svg></button>
    <button aria-label="インスペクタ" class="flex h-5 w-[22px] items-center justify-center bg-[#b0b0b6]"><svg viewBox="0 0 16 14" class="h-[14px] w-4"><path d="M1 4l6-3 4 2-6 3zM1 9l5-2 3 2-5 3z" fill="#fff" stroke="#555"/><path d="M6 14l2-5 6-6 2 2-6 6z" fill="#666"/></svg></button>
    <button aria-label="設定" class="flex h-5 w-[22px] items-center justify-center"><svg viewBox="0 0 15 14" class="h-[14px] w-[15px]"><path d="M.5.500h14v10H.5z" fill="#fff" stroke="#555"/><path d="M0 0h15v2.500H0z" fill="#555"/><circle cx="8.500" cy="9.500" r="2.800" fill="#fff" stroke="#555" stroke-width="2"/></svg></button>
  </div>
  <span class="ml-[11px] w-12 text-[13px] text-[#333]">100%</span>
  <button aria-label="縮小" class="ml-[6px]"><svg viewBox="0 0 10 10" class="h-[10px] w-[10px]"><path d="M0 5.500h10" stroke="#888"/></svg></button>
  <input aria-label="ズーム" type="range" value="3" class="ml-3 h-[14px] w-[98px] appearance-none bg-transparent [&::-webkit-slider-runnable-track]:h-px [&::-webkit-slider-runnable-track]:bg-[#999] [&::-webkit-slider-thumb]:-mt-[5px] [&::-webkit-slider-thumb]:h-[11px] [&::-webkit-slider-thumb]:w-1 [&::-webkit-slider-thumb]:appearance-none [&::-webkit-slider-thumb]:bg-[#555]">
  <button aria-label="拡大" class="ml-3"><svg viewBox="0 0 10 10" class="h-[10px] w-[10px]"><path d="M0 5h10M5 0v10" stroke="#777"/></svg></button>
  <svg viewBox="0 0 14 14" class="ml-[23px] h-[14px] w-[14px]"><path d="M7 0l2.500 3h-5zM7 14l2.500-3h-5zM0 7l3-2.500v5zM14 7l-3-2.500v5zM5 7l2-2 2 2-2 2z" fill="#666"/></svg>
  <svg viewBox="0 0 14 14" class="ml-6 h-[14px] w-[14px]"><path d="M7 0q4 1 4 5v3l2 3H1l2-3V5q0-4 4-5zM5 12h4q-.5 2-2 2t-2-2z" fill="#333"/></svg>
</footer>

<script>
const use = (id, cls) => `<svg class="${cls}"><use href="#${id}"/></svg>`;
const fMark = '<span class="flex h-4 w-4 items-center justify-center rounded-full bg-[#3080c4] text-[11px] font-medium leading-none text-white">F</span>';

// Ribbon check boxes
const check = (label, on, off) => `<label class="flex h-4 items-center gap-1"><span class="relative h-[14px] w-[14px]"><input type="checkbox" ${on ? 'checked' : ''} ${off ? 'disabled' : ''} class="block h-[14px] w-[14px] appearance-none border border-[#ababab] bg-white disabled:border-[#c8c8c8] disabled:bg-[#f0f0f0]">${on ? `<svg class="pointer-events-none absolute left-0 top-0 h-[14px] w-[14px] ${off ? 'text-[#999]' : 'text-[#333]'}"><use href="#tick"/></svg>` : ''}</span>${label}</label>`;
document.getElementById('editor-checks').innerHTML = ['エディタ間トレース', 'インディケータ', 'フィーチャマーク'].map(t => check(t, true, false)).join('');
document.getElementById('diagram-checks').innerHTML = ['整列ガイド', 'サブツールボックス', 'オーバービュー'].map(t => check(t, true, true)).join('');
document.getElementById('form-checks').innerHTML = ['親要素名を表示', '1行の高さで表示'].map(t => check(t, false, false)).join('');

// Project tree: [level, arrow, icon, label, feature mark]
const tree = [
  [0,'d','project','先進運転システムソフト開発'],[1,'d','bars','システム要件開発'],[2,'d','usecase','ユースケース'],
  [3,'r','ellipse','追従走行（ADAPTIVE）'],[3,'r','ellipse','定速走行（CRUISE）',1],[3,'r','ellipse','車線維持アシスト(TBD)',1],
  [3,'r','ellipse','自動緊急ブレーキ（TBD）',1],[3,'r','ellipse','先行車を検出する'],[3,'','ellipse','先行車との車間距離を維持する'],
  [3,'','ellipse','追従走行を中止する'],[3,'','ellipse','追従走行を開始する'],[3,'','ellipse','追従走行を再開する'],
  [3,'','ellipse','追従走行を終了する'],[3,'','ellipse','追従距離を変更する'],[3,'','actor','ドライバ'],
  [3,'','actor','前方監視センサ'],[3,'','actor','エンジンECU(or HV-ECU)'],[3,'','actor','ブレーキECU',1],[3,'','actor','パワステ',1],
  [2,'r','blocktree','ADASシステム要件'],[1,'r','bars','システム論理設計'],[1,'d','bars','システム物理設計'],
  [2,'r','blocks','システム物理構造'],[1,'r','bars','ソフト要求仕様開発'],[1,'r','bars','ソフト設計']
];
const indent = ['pl-0', 'pl-3', 'pl-6', 'pl-9'];
document.getElementById('tree').innerHTML = tree.map(([lv, ar, ic, t, f]) =>
  `<li class="flex h-5 items-center pr-[2px] text-black ${indent[lv]} ${t === 'ユースケース' ? 'bg-[#e1e2e6]' : ''}"><span class="w-2 text-[#444]">${ar ? use(ar === 'd' ? 'tri-down' : 'tri-right', 'h-2 w-2') : ''}</span>${use(ic, 'ml-[6px] h-4 w-4')}<span class="ml-[5px] flex-1">${t}</span>${f ? fMark : ''}</li>`).join('');

// Use-case list: [name, description, row height, kind, feature mark, scroll mark]
const rows = [
  ['ユースケース','クルーズコントロールシステム開発における、ユースケースを\n定義する。','h-[33px]','root'],
  ['追従走行（ADAPTIVE）','先行車との車間距離を維持した走行\n \n先行車がいる場合、設定した車間距離\n踏まなくても自動的に先行車との車間\n御する。\n先行車がいない場合は、設定された速度\n制御する。','h-[101px]','case',0,1],
  ['基本フロー 先行車に追従して走行する','クルコン起動から始まるメインシナリオ'],
  ['代替フロー（A1）先行車がいない、または、先行車がいなくなった場合','<B-17>にて、先行車がいない、または'],
  ['代替フロー（A2）先行車を検出した場合','<A1-4>において、先行車を検出した場合'],
  ['代替フロー（A3）先行車が目標速度以上で走行している場合','<B-19>において、先行車が目標速度以上'],
  ['代替フロー（A4）車間設定を変更する場合','<B-17>～<B-20>、代替フロー\nを変更する場合','h-[33px]'],
  ['代替フロー（A5）減速するのにブレーキをかける必要がある場合','<B-20>において、減速するのにブレーキ','h-5','selected'],
  ['代替フロー（A6）目標速度を上げる場合（タップアップ）','<B-17>～<B-20>、代替フロー\nを上げる場合（タップアップ）','h-[33px]'],
  ['代替フロー（A7）目標速度を下げる場合（タップダウン）','<B-17>～<B-20>、代替フロー\nを下げる場合（タップダウン）','h-[33px]'],
  ['代替フロー（A8）目標速度を徐々に上げる場合（アクセラレート）','<B-17>～<B-20>、代替フロー\nを徐々に上げる場合（アクセラレート）','h-[33px]'],
  ['代替フロー（A9）目標速度を徐々に下げる場合（コースト）','<B-17>～<B-20>、代替フロー\nを徐々に下げる場合（コースト）','h-[33px]'],
  ['代替フロー（A10）一時的に目標速度以上に加速する場合（オーバーライド）','<B-17>～<B-20>、代替フロー\n目標速度以上に加速する場合（オーバー','h-[33px]'],
  ['代替フロー（A11）目標速度を設定し直す場合','<A10-2>において、目標速度を設定'],
  ['代替フロー（A12）クルコン走行を終了する場合','<B-17>～<B-20>、代替フロー\n行を終了する場合','h-[33px]'],
  ['代替フロー（A13）クルコン走行を再開する場合','<A12-4>において、クルコン走行を再開'],
  ['代替フロー（A14）目標速度を更新してクルコン走行を開始する場合','<A12-4>において、目標速度を更新'],
  ['代替フロー（A15）クルコンをOFFにする場合','<A12-4>において、クルコンをOFFにする'],
  ['例外フロー（E1）クルコンをONにできる条件が成立していない場合','<B-2>において、クルコンをONにできる'],
  ['例外フロー（E2）クルコン走行が開始できない場合','<B-13>において、クルコン走行が開始'],
  ['例外フロー（E3）ドライバがブレーキを踏んだ場合','<B-17>～<B-20>、代替フロー\nレーキを踏んだ場合','h-[33px]'],
  ['定速走行（CRUISE）','設定速度を維持した走行\n \nT.B.D.\n追従モードで先行車両無しの場合の走行','h-[60px]','case',1,1],
  ['基本フロー','定速走行時のメインシナリオ'],
  ['車線維持アシスト(TBD)','車線の中央を走行するよう常時ステアリング','h-5','leaf',1,1],
  ['自動緊急ブレーキ（TBD）','障害物を検知し、衝突に備えて自動で','h-5','leaf',1,1]
];
const barHeight = { 'h-[101px]': 'h-[94px]', 'h-[60px]': 'h-[53px]', 'h-5': 'h-[13px]' };
const esc = s => s.replace(/</g, '&lt;').replace(/>/g, '&gt;');
document.getElementById('grid').innerHTML = rows.map(([n, d, h = 'h-5', kind = 'flow', f, bar]) => {
  const sel = kind === 'selected';
  const lead = {
    root: `<span class="w-[5px]"></span>${use('tri-down','h-[10px] w-[10px] text-[#aaa]')}${use('usecase','mx-[5px] h-4 w-4')}`,
    case: `<span class="w-[15px]"></span>${use('tri-down','h-[10px] w-[10px] text-[#aaa]')}${use('ellipse','mx-[5px] h-3 w-4')}`,
    leaf: `<span class="w-[25px]"></span>${use('ellipse','mx-[5px] h-3 w-4')}`
  }[kind] || `<span class="w-[27px]"></span>${use('tri-right','h-[10px] w-[10px] text-[#aaa]')}${use('steps','ml-[5px] mr-2 h-3 w-3')}`;
  return `<tr class="${h} ${sel ? 'bg-[#eff6fa]' : ''}">
    <td class="border border-[#c0c0c0] p-0"><div class="pl-[2px]">${f ? fMark : ''}</div></td>
    <td class="border p-0 ${sel ? 'border-double border-[#3a8fd0]' : 'border-[#c0c0c0]'}"><div class="flex items-center overflow-hidden">${lead}<span>${n}</span></div></td>
    <td class="bg-[#efefef] p-0"></td>
    <td class="border border-l-0 border-[#c0c0c0] p-0"><div class="overflow-hidden whitespace-pre pl-1">${esc(d)}</div></td>
    <td class="border border-[#c0c0c0] p-0">${bar ? `<div class="ml-auto mr-[3px] w-[5px] border border-[#c4c4c4] ${barHeight[h]}"></div>` : ''}</td></tr>`;
}).join('');

// Inspector property rows: [arrow, icon, name, value, link]
const props = [
  ['','','名前','代替フロー（A5）減速するのにブレーキをかける'],['','','説明','<B-20>において、減速するのにブレーキ'],['','','設計方針',''],
  ['d','field','ステップ','[4]'],
  ['r','','[0]','システムは、減速度を得るのに',1],['r','','[1]','システムは、ブレーキで出す減速度',1],['r','','[2]','システムは、減速のためブレーキ',1],['r','','[3]','<B-17>に戻る。:ステップ',1],
  ['','note','コメント','（なし）']
];
document.getElementById('props').innerHTML =
  `<tr class="h-5 bg-[#f3f3f3]"><td colspan="2" class="border-y border-[#c0c0c0] p-0"><div class="flex items-center">${use('tri-down','ml-1 h-[10px] w-[10px] text-[#aaa]')}<span class="ml-[9px]">基本情報</span></div></td></tr>` +
  props.map(([ar, ic, n, v, link]) => `<tr class="h-5"><td class="border border-l-0 border-[#c0c0c0] p-0"><div class="flex items-center ${ar === 'r' ? 'pl-[15px]' : 'pl-1'}">${ar ? use(ar === 'd' ? 'tri-down' : 'tri-right', 'h-[10px] w-[10px] text-[#aaa]') : '<span class="w-[10px]"></span>'}${ic ? use(ic, 'ml-[10px] mr-[5px] h-[10px] w-[15px]') : '<span class="w-[9px]"></span>'}<span>${n}</span></div></td><td class="border-y border-[#c0c0c0] p-0"><div class="flex items-center pl-[3px]">${link ? use('field', 'ml-[3px] mr-[6px] h-[9px] w-[14px] shrink-0') + `<a href="#step" class="truncate text-[#3f8fd0]">${esc(v)}</a>` : `<span class="truncate">${esc(v)}</span>`}</div></td></tr>`).join('');
</script>
</body>
</html>
